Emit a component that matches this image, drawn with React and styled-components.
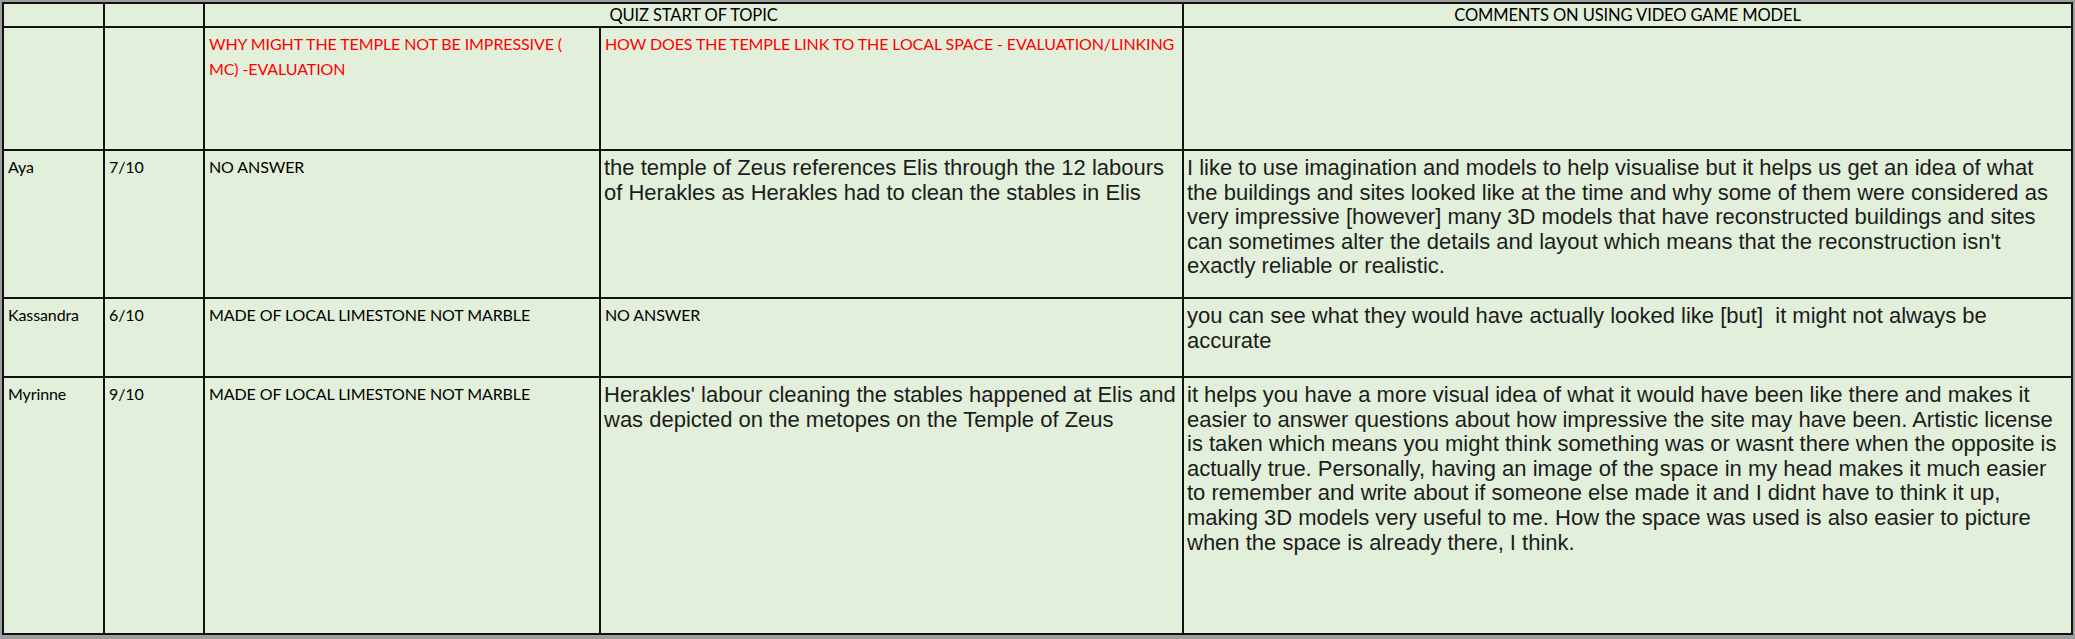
import React from 'react';
import styled, { createGlobalStyle } from 'styled-components';

const GlobalStyle = createGlobalStyle`
	html, body {
		margin: 0;
		padding: 0;
		background: #9e9e9e;
	}
`;

const rows = [
	{
		name: 'Aya',
		score: '7/10',
		impressive: 'NO ANSWER',
		link: 'the temple of Zeus references Elis through the 12 labours of Herakles as Herakles had to clean the stables in Elis',
		linkBig: true,
		comment:
			"I like to use imagination and models to help visualise but it helps us get an idea of what the buildings and sites looked like at the time and why some of them were considered as very impressive [however] many 3D models that have reconstructed buildings and sites can sometimes alter the details and layout which means that the reconstruction isn't exactly reliable or realistic.",
	},
	{
		name: 'Kassandra',
		score: '6/10',
		impressive: 'MADE OF LOCAL LIMESTONE NOT MARBLE',
		link: 'NO ANSWER',
		linkBig: false,
		comment: 'you can see what they would have actually looked like [but]  it might not always be accurate',
	},
	{
		name: 'Myrinne',
		score: '9/10',
		impressive: 'MADE OF LOCAL LIMESTONE NOT MARBLE',
		link: "Herakles' labour cleaning the stables happened at Elis and was depicted on the metopes on the Temple of Zeus",
		linkBig: true,
		comment:
			"it helps you have a more visual idea of what it would have been like there and makes it easier to answer questions about how impressive the site may have been. Artistic license is taken which means you might think something was or wasnt there when the opposite is actually true. Personally, having an image of the space in my head makes it much easier to remember and write about if someone else made it and I didnt have to think it up, making 3D models very useful to me. How the space was used is also easier to picture when the space is already there, I think.",
	},
];

const App = () => {
	return (
		<>
			<GlobalStyle />
			<Page>
				<Sheet>
					<Cell />
					<Cell />
					<HeadCell $span={2}>QUIZ START OF TOPIC</HeadCell>
					<HeadCell>COMMENTS ON USING VIDEO GAME MODEL</HeadCell>

					<Cell />
					<Cell />
					<Cell $red>WHY MIGHT THE TEMPLE NOT BE IMPRESSIVE ( MC) -EVALUATION</Cell>
					<Cell $red $tight>
						HOW DOES THE TEMPLE LINK TO THE LOCAL SPACE - EVALUATION/LINKING
					</Cell>
					<Cell />

					{rows.map((r) => (
						<React.Fragment key={r.name}>
							<Cell>{r.name}</Cell>
							<Cell>{r.score}</Cell>
							<Cell>{r.impressive}</Cell>
							{r.linkBig ? <Answer>{r.link}</Answer> : <Cell>{r.link}</Cell>}
							<Answer>{r.comment}</Answer>
						</React.Fragment>
					))}
				</Sheet>
			</Page>
		</>
	);
};

const Page = styled.div`
	padding: 2px 0 0 2px;
	height: 637px;
	box-sizing: border-box;
`;

const Sheet = styled.div`
	display: grid;
	grid-template-columns: 99px 98px 394px 581px 887px;
	grid-template-rows: 22px 121px 146px 77px 255px;
	gap: 2px;
	padding: 2px;
	width: max-content;
	background: #111;
`;

const Cell = styled.div`
	background: #e2efda;
	padding: 3px ${(p) => (p.$tight ? 0 : 14)}px 0 4px;
	font-family: Lato, 'Liberation Sans', sans-serif;
	font-size: 16px;
	letter-spacing: -0.1px;
	line-height: 25px;
	color: ${(p) => (p.$red ? '#ff0000' : '#000')};
	white-space: pre-wrap;
	overflow: hidden;
`;

const HeadCell = styled(Cell)`
	grid-column: span ${(p) => p.$span || 1};
	text-align: center;
	padding: 0;
	font-size: 16.5px;
	line-height: 22px;
`;

const Answer = styled(Cell)`
	font-family: 'Liberation Sans', Arial, sans-serif;
	font-size: 22px;
	letter-spacing: 0;
	line-height: 24.6px;
	color: #1c1c1c;
	padding: 5px 2px 0 3px;
`;

export default App;
